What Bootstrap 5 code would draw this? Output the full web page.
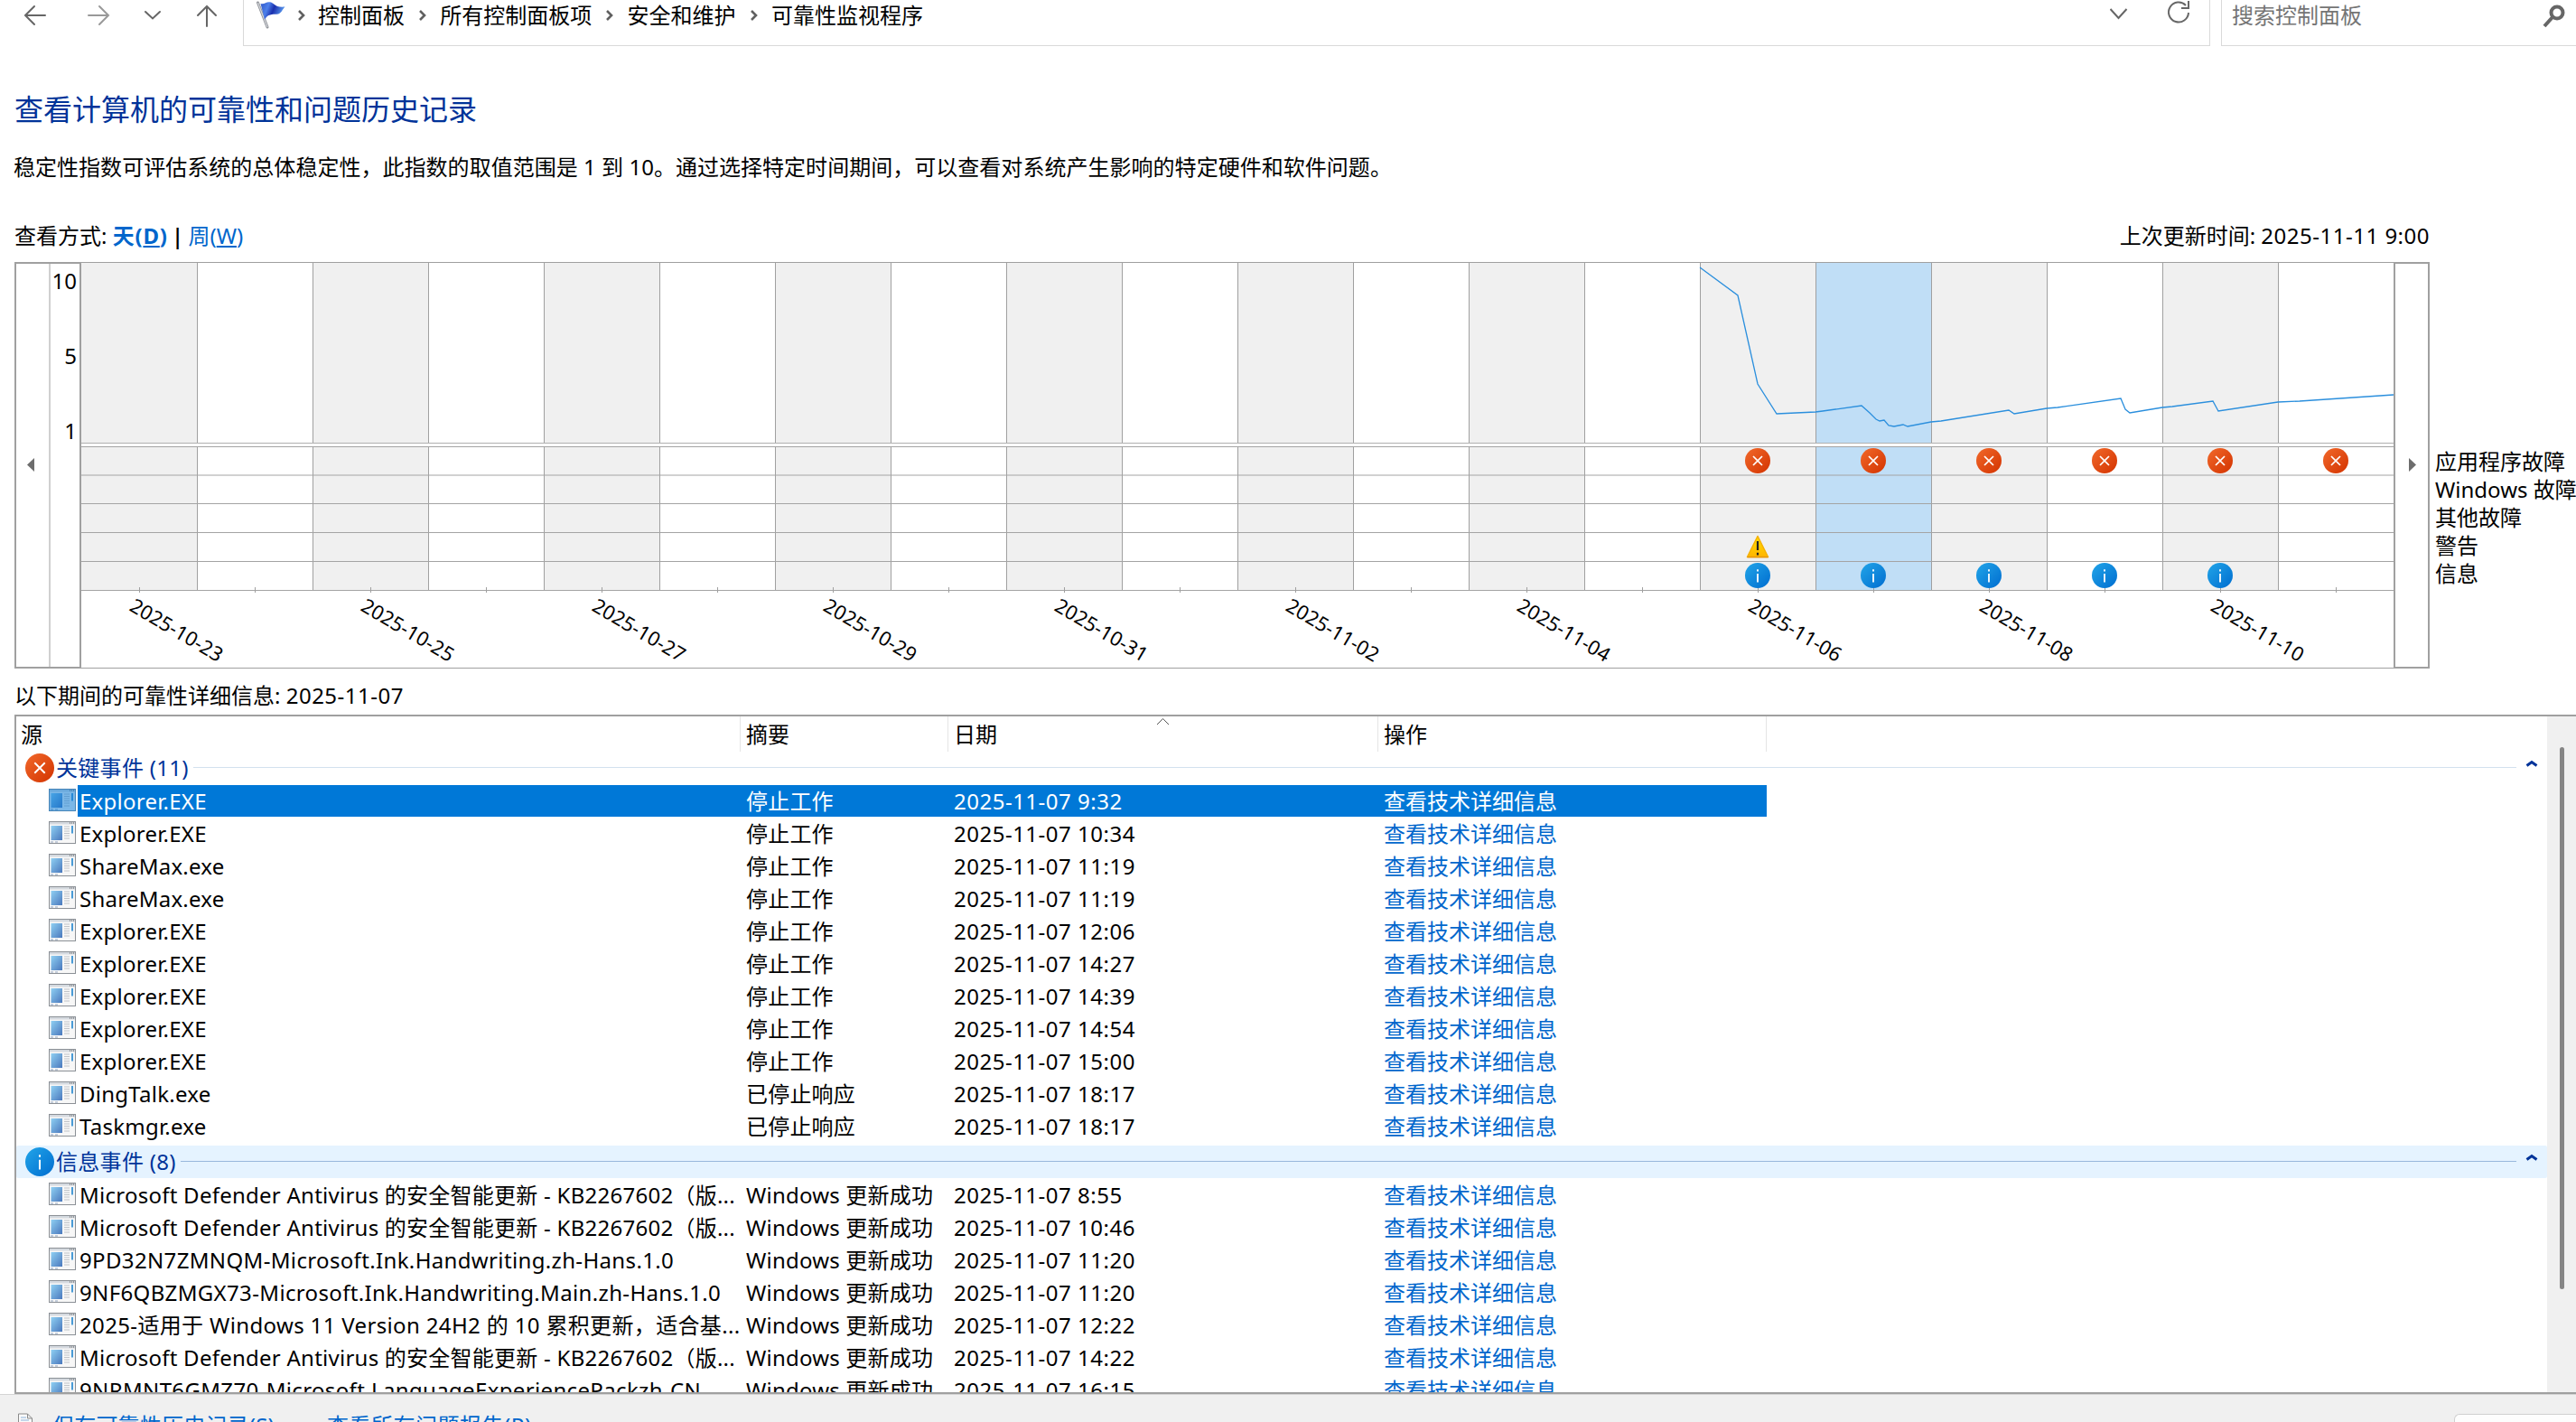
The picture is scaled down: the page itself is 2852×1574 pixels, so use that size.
<!DOCTYPE html>
<html lang="zh-CN">
  <head>
    <meta charset="UTF-8" />
    <meta name="viewport" content="width=device-width, initial-scale=1.0" />
    <title>可靠性监视程序</title>
    <!-- Bootstrap CSS -->
    <link
      href="https://cdn.jsdelivr.net/npm/bootstrap@5.3.0/dist/css/bootstrap.min.css"
      rel="stylesheet"
    />
    <style>
      body {
        width: 2852px;
        height: 1574px;
        overflow: hidden;
        font-family: "Noto Sans", "Noto Sans CJK SC", sans-serif;
        font-size: 24px;
        line-height: 36px;
        color: #000;
        background: #fff;
      }

      svg {
        display: block;
        flex: none;
      }

      /* Address bar */
      .top-bar {
        height: 51px;
        padding-left: 22px;
      }

      .nav-icons {
        width: 247px;
      }

      .address-box {
        width: 2178px;
        height: 51px;
        margin-right: 12px;
        padding: 0 20px 17px 12px;
        border: 1px solid #d9d9d9;
        border-top: 0;
      }

      .search-box {
        height: 51px;
        padding: 0 11px 17px 11px;
        border: 1px solid #d9d9d9;
        border-width: 0 0 1px 1px;
        color: #757575;
      }

      .crumb-sep {
        width: 39.3px;
      }

      .crumb-sep.first {
        width: 34px;
      }

      .first svg {
        margin-left: -4px;
      }

      /* Heading and texts */
      .page-title {
        font-size: 32px;
        line-height: 48px;
        color: #003399;
        margin: 46px 0 0 16px;
      }

      .intro {
        margin: 22px 0 0 15px;
        letter-spacing: 0.03px;
      }

      .view-row {
        width: 2690px;
        margin-top: 40px;
        padding-left: 16px;
        height: 47px;
      }

      .blue-link {
        color: #0066cc;
        text-decoration: none;
      }

      .day-link {
        letter-spacing: 0.8px;
      }

      .view-bar {
        margin: 0 -1px 0 -2px;
        font-weight: 600;
      }

      .num {
        letter-spacing: 0.5px;
      }

      /* Chart */
      .chart-box {
        margin-left: 16px;
        height: 450px;
      }

      .legend-list {
        padding: 205px 0 0 6px;
        line-height: 31px;
      }

      .detail-label {
        margin: 12px 0 3px 16px;
      }

      /* Event list */
      .event-box {
        margin-left: 16px;
        height: 752px;
        border: 2px solid #a0a0a0;
        border-right: 0;
        overflow: hidden;
      }

      .list-head {
        height: 39px;
      }

      .list-head > div {
        height: 39px;
        padding-top: 2px;
        border-right: 1px solid #e5e5e5;
      }

      .sort-mark {
        margin-top: -2px;
      }

      .c-source {
        width: 802px;
        padding-left: 5px;
      }

      .c-summary {
        width: 230px;
        padding-left: 6px;
      }

      .c-date {
        width: 476px;
        padding-left: 6px;
      }

      .c-action {
        width: 430px;
        padding-left: 6px;
      }

      .group-row {
        height: 36px;
        margin-bottom: 1px;
        padding-left: 10px;
        color: #003399;
        width: 2802px;
        border-radius: 2px;
      }

      .group-row span {
        padding-left: 2px;
        letter-spacing: 0.3px;
      }

      .group-row.hot {
        margin-top: 3px;
        background: #e5f3ff;
      }

      .group-line {
        height: 1px;
        background: #d3e1ee;
        margin: 0 0 1px 5px;
      }

      .hot .group-line {
        background: #98b8dc;
      }

      .event-row {
        height: 36px;
        padding-left: 36px;
      }

      .event-row .c-name {
        width: 734px;
        padding-left: 2px;
        height: 35px;
        letter-spacing: 0.25px;
      }

      .event-row .c-name.pkg {
        letter-spacing: 0.35px;
      }

      .event-row .c-summary {
        letter-spacing: 0.2px;
      }

      .fill {
        width: 1870px;
        height: 35px;
      }

      .picked .fill {
        background: #0078d7;
        color: #fff;
      }

      .picked .blue-link {
        color: #fff;
      }

      .scroll-rail {
        width: 32px;
        background: #f0f0f0;
        padding: 34px 12px 0 14px;
      }

      .scroll-thumb {
        height: 600px;
        width: 5px;
        border-radius: 3px;
        background: #858585;
      }

      .bottom-bar {
        height: 31px;
        background: #f0f0f0;
        border-top: 1px solid #d4d4d4;
        padding-left: 19px;
        overflow: hidden;
      }

      .bottom-bar svg {
        margin-top: 20px;
      }

      .bottom-bar a {
        margin: 16px 58px 0 13px;
        letter-spacing: 0.2px;
      }

      .bottom-bar a + a {
        margin-left: 0;
        letter-spacing: 0.5px;
      }

      .ok-btn {
        width: 135px;
        height: 40px;
        margin-top: 21px;
        background: #fdfdfd;
        border: 1px solid #d0d0d0;
        border-right: 0;
        border-radius: 6px 0 0 0;
      }
    </style>
  </head>
  <body>
    <!-- Shared icons -->
    <svg width="0" height="0" class="position-absolute">
      <defs>
        <linearGradient id="gRed" x1="0" y1="0" x2="1" y2="1">
          <stop offset="0" stop-color="#f1692b" />
          <stop offset="1" stop-color="#d33300" />
        </linearGradient>
        <linearGradient id="gBlue" x1="0" y1="0" x2="1" y2="1">
          <stop offset="0" stop-color="#22a5e8" />
          <stop offset="1" stop-color="#006dd0" />
        </linearGradient>
        <linearGradient id="gWarn" x1="0" y1="0" x2="0" y2="1">
          <stop offset="0" stop-color="#ffe000" />
          <stop offset="1" stop-color="#ffb400" />
        </linearGradient>
        <linearGradient id="gApp" x1="0" y1="0" x2="1" y2="1">
          <stop offset="0" stop-color="#8fd0f3" />
          <stop offset="1" stop-color="#4a78bd" />
        </linearGradient>
        <linearGradient id="gFlag" x1="0" y1="0" x2="1" y2="0.3">
          <stop offset="0" stop-color="#2f55c8" />
          <stop offset="0.35" stop-color="#4d80ea" />
          <stop offset="0.6" stop-color="#1a2fae" />
          <stop offset="1" stop-color="#5c9cf0" />
        </linearGradient>
        <symbol id="icoError" viewBox="0 0 28 28">
          <circle cx="14" cy="14" r="14" fill="url(#gRed)" />
          <path d="M9 9l10 10M19 9L9 19" stroke="#fff" stroke-width="1.7" />
        </symbol>
        <symbol id="icoInfo" viewBox="0 0 28 28">
          <circle cx="14" cy="14" r="14" fill="url(#gBlue)" />
          <path d="M14 12v9.500M14 7.300v2.200" stroke="#fff" stroke-width="1.8" />
        </symbol>
        <symbol id="icoWarn" viewBox="0 0 26 26">
          <path
            d="M13 1.500L24.500 24.500H1.500Z"
            fill="url(#gWarn)"
            stroke="#f5b000"
            stroke-width="1.500"
            stroke-linejoin="round"
          />
          <path d="M1.500 24.800H24.500" stroke="#e08a00" stroke-width="1" />
          <path d="M13 7v10M13 19.800v2.700" stroke="#222" stroke-width="2.200" />
        </symbol>
        <symbol id="icoApp" viewBox="0 0 30 26">
          <rect x="0.500" y="0.500" width="29" height="24" fill="#f7f7f7" stroke="#8b9096" />
          <rect x="1" y="1" width="28" height="2.500" fill="#d5dae0" />
          <path d="M23 2h1M25 2h1M27 2h1" stroke="#555" />
          <rect x="2.500" y="5" width="12.500" height="16" fill="url(#gApp)" />
          <path
            d="M17 6h6M17 8.500h6M17 11h6M17 13.500h6M17 16h6M17 19h6"
            stroke="#c0c3c8"
          />
          <path d="M26 5v8.500" stroke="#4a9bd6" stroke-width="2" />
          <path d="M2 23h3M7 23h3" stroke="#8fa3c0" />
        </symbol>
      </defs>
    </svg>

    <!-- Address bar -->
    <div class="top-bar d-flex">
      <div class="nav-icons">
        <svg
          width="247"
          height="36"
          fill="none"
          stroke="#666"
          stroke-width="2"
          stroke-linecap="round"
        >
          <path d="M28 17H6M16 7L6 17l10 10" />
          <path d="M76 17h22M88 7l10 10-10 10" stroke="#999" />
          <path d="M139 13l8 7.500 8-7.500" />
          <path d="M207 29V7M197 17L207 7l10 10" />
        </svg>
      </div>
      <div class="address-box d-flex align-items-center">
        <svg width="36" height="34" viewBox="0 0 36 34">
          <path d="M3.500 3l10.500 27" stroke="#8f9298" stroke-width="3" stroke-linecap="round" />
          <path d="M3.500 3l10.500 27" stroke="#d4d6da" stroke-width="1.200" />
          <path
            d="M6.500 4c4 1 6-2 10-1.800 5 .3 5 6.500 17 5.300-3 3-4 8-9 8.300-5 .2-10-.5-13.500 6z"
            fill="url(#gFlag)"
          />
        </svg>
        <span class="crumb-sep first" data-sep></span>
        <span>控制面板</span>
        <span class="crumb-sep" data-sep></span>
        <span>所有控制面板项</span>
        <span class="crumb-sep" data-sep></span>
        <span>安全和维护</span>
        <span class="crumb-sep" data-sep></span>
        <span>可靠性监视程序</span>
        <svg class="ms-auto" width="90" height="34" fill="none" stroke="#666" stroke-width="2">
          <path d="M0.500 10l9 10 9-10" />
          <path d="M84 6a11 11 0 1 0 3 8M87 1v8h-8" />
        </svg>
      </div>
      <div class="search-box d-flex flex-fill align-items-center">
        <span>搜索控制面板</span>
        <svg class="ms-auto" width="26" height="34" fill="none" stroke="#666">
          <circle cx="16" cy="14" r="6.500" stroke-width="4" />
          <path d="M11 19L2 29" stroke-width="4" />
        </svg>
      </div>
    </div>

    <h1 class="page-title fw-normal">查看计算机的可靠性和问题历史记录</h1>
    <div class="intro">
      稳定性指数可评估系统的总体稳定性，此指数的取值范围是 1 到
      10。通过选择特定时间期间，可以查看对系统产生影响的特定硬件和软件问题。
    </div>
    <div class="view-row d-flex justify-content-between">
      <div>
        查看方式: <a href="#" class="blue-link day-link fw-bold">天(<u>D</u>)</a>
        <span class="view-bar">|</span>
        <a href="#" class="blue-link">周(<u>W</u>)</a>
      </div>
      <div>上次更新时间: <span class="num">2025-11-11 9:00</span></div>
    </div>

    <!-- Stability chart -->
    <div class="chart-box d-flex">
      <svg id="chart" width="2674" height="450" viewBox="16 290 2674 450"></svg>
      <div class="legend-list text-nowrap">
        <div>应用程序故障</div>
        <div>Windows 故障</div>
        <div>其他故障</div>
        <div>警告</div>
        <div>信息</div>
      </div>
    </div>

    <div class="detail-label">以下期间的可靠性详细信息: <span class="num">2025-11-07</span></div>

    <!-- Event list -->
    <div class="event-box d-flex">
      <div class="flex-fill">
        <div class="list-head d-flex">
          <div class="c-source">源</div>
          <div class="c-summary">摘要</div>
          <div class="c-date d-flex">
            日期
            <svg class="sort-mark ms-auto me-auto" width="150" height="20" fill="none" stroke="#555">
              <path d="M41 9l6.500-6.500L54 9" />
            </svg>
          </div>
          <div class="c-action">操作</div>
        </div>
        <div id="events"></div>
      </div>
      <div class="scroll-rail"><div class="scroll-thumb"></div></div>
    </div>

    <!-- Bottom bar -->
    <div class="bottom-bar d-flex">
      <svg width="26" height="30" viewBox="0 0 26 30">
        <path d="M1.500 1h10l5 5v20h-15zM11.500 1v5h5" fill="#fafafa" stroke="#8a8a8a" />
        <path d="M4 5h6M4 8h9" stroke="#8db4dc" />
      </svg>
      <a href="#" class="blue-link">保存可靠性历史记录(S)</a>
      <a href="#" class="blue-link">查看所有问题报告(R)</a>
      <div class="ok-btn ms-auto"></div>
    </div>

    <!-- Bootstrap JS -->
    <script src="https://cdn.jsdelivr.net/npm/bootstrap@5.3.0/dist/js/bootstrap.bundle.min.js"></script>

    <script>
      // Breadcrumb separators
      document.querySelectorAll("[data-sep]").forEach((el) => {
        el.innerHTML = `<svg width="38" height="34" fill="none" stroke="#606060" stroke-width="2.600"><path d="M17 12l5 5-5 5"/></svg>`;
      });

      // Chart geometry
      const left = 90;
      const step = 128;
      const days = 20;
      const selected = 15;
      const rowLines = [494, 525.5, 557, 589, 621, 653];

      function drawChart() {
        let s = "";
        for (let i = 0; i < days; i++) {
          const x = left + i * step;
          const color = i === selected ? "#c0def6" : i % 2 === 0 ? "#f0f0f0" : "#fff";
          s += `<rect x="${x}" y="291" width="${step}" height="199" fill="${color}"/>`;
          s += `<rect x="${x}" y="494" width="${step}" height="159" fill="${color}"/>`;
        }
        for (let i = 1; i < days; i++) {
          const x = left + i * step + 0.5;
          s += `<path d="M${x} 291V490M${x} 494V653" stroke="#a0a0a0"/>`;
        }
        s += `<path d="M90 490.5H2650" stroke="#b0b0b0"/>`;
        rowLines.forEach((y) => {
          s += `<path d="M90 ${y + 0.5}H2650" stroke="#a4a4a4"/>`;
        });
        // frame and scroll buttons
        s += `<path d="M16 290.500H2690M16 739.500H2690M55 291V739" stroke="#a0a0a0" fill="none"/>`;
        s += `<path d="M17 290V740M89 290V740M2651 290V740M2689 290V740M16 291H90M16 739H90M2650 291H2690M2650 739H2690" stroke="#a0a0a0" stroke-width="2" fill="none"/>`;
        s += `<path d="M38 507v15l-8-7.500zM2667 507v15l8-7.500z" fill="#6d6d6d"/>`;
        // score axis
        [["10", 320], ["5", 403], ["1", 486]].forEach(([t, y]) => {
          s += `<text x="85" y="${y}" text-anchor="end">${t}</text>`;
        });
        // stability index
        s += `<polyline fill="none" stroke="#2b8fdd" stroke-width="1.300" points="1882,296 1924,327 1946,425 1967,458 2010,456 2018,455 2061,449 2070,457 2077,464 2081,466 2086,465 2091,471 2097,472 2107,470 2112,472 2138,467 2149,466 2224,454 2230,458 2266,452 2278,451 2348,441 2353,453 2358,457 2394,451 2405,450 2450,444 2456,455 2522,445 2546,444 2650,437"/>`;
        for (let i = 0; i < days; i++) {
          const x = left + i * step + 64.5;
          s += `<path d="M${x} 650V656" stroke="#a0a0a0"/>`;
        }
        const icons = [["icoError", 14, 19, 496], ["icoInfo", 14, 18, 623]];
        icons.forEach(([id, from, to, y]) => {
          for (let i = from; i <= to; i++) {
            s += `<use href="#${id}" x="${left + i * step + 50}" y="${y}" width="28" height="28"/>`;
          }
        });
        s += `<use href="#icoWarn" x="1933" y="592" width="26" height="26"/>`;
        // date labels, one for every second day
        const labels = [
          "2025-10-23", "2025-10-25", "2025-10-27", "2025-10-29", "2025-10-31",
          "2025-11-02", "2025-11-04", "2025-11-06", "2025-11-08", "2025-11-10",
        ];
        labels.forEach((t, i) => {
          const x = 142 + i * 256;
          s += `<text transform="translate(${x} 675) rotate(30.500)" font-size="22" textLength="115">${t}</text>`;
        });
        document.getElementById("chart").innerHTML = s;
      }

      const defender = "Microsoft Defender Antivirus 的安全智能更新 - KB2267602（版...";
      const ok = "Windows 更新成功";
      const groups = [
        {
          title: "关键事件 (11)",
          icon: "icoError",
          rows: [
            ["Explorer.EXE", "停止工作", "9:32"],
            ["Explorer.EXE", "停止工作", "10:34"],
            ["ShareMax.exe", "停止工作", "11:19"],
            ["ShareMax.exe", "停止工作", "11:19"],
            ["Explorer.EXE", "停止工作", "12:06"],
            ["Explorer.EXE", "停止工作", "14:27"],
            ["Explorer.EXE", "停止工作", "14:39"],
            ["Explorer.EXE", "停止工作", "14:54"],
            ["Explorer.EXE", "停止工作", "15:00"],
            ["DingTalk.exe", "已停止响应", "18:17"],
            ["Taskmgr.exe", "已停止响应", "18:17"],
          ],
        },
        {
          title: "信息事件 (8)",
          icon: "icoInfo",
          hot: true,
          rows: [
            [defender, ok, "8:55"],
            [defender, ok, "10:46"],
            ["9PD32N7ZMNQM-Microsoft.Ink.Handwriting.zh-Hans.1.0", ok, "11:20"],
            ["9NF6QBZMGX73-Microsoft.Ink.Handwriting.Main.zh-Hans.1.0", ok, "11:20"],
            ["2025-适用于 Windows 11 Version 24H2 的 10 累积更新，适合基...", ok, "12:22"],
            [defender, ok, "14:22"],
            ["9NRMNT6GMZ70-Microsoft.LanguageExperiencePackzh-CN", ok, "16:15"],
          ],
        },
      ];

      function drawEvents() {
        let html = "";
        groups.forEach((g, gi) => {
          html += `
            <div class="group-row d-flex align-items-center ${g.hot ? "hot" : ""}">
              <svg width="32" height="32"><use href="#${g.icon}" width="32" height="32"/></svg>
              <span>${g.title}</span>
              <div class="group-line flex-fill"></div>
              <svg width="34" height="20" class="mb-2"><path d="M11.500 11.500l5.500-4 5.500 4" fill="none" stroke="#003399" stroke-width="3"/></svg>
            </div>`;
          g.rows.forEach((r, ri) => {
            const picked = gi === 0 && ri === 0;
            const tint = picked ? `<rect width="30" height="25" fill="#0078d7" opacity="0.5"/>` : "";
            html += `
              <div class="event-row d-flex ${picked ? "picked" : ""}">
                <svg width="32" height="26" class="mt-1"><use href="#icoApp" width="30" height="26"/>${tint}</svg>
                <div class="fill d-flex">
                  <div class="c-name text-nowrap ${/^(9|2025)/.test(r[0]) ? "pkg" : ""}">${r[0]}</div>
                  <div class="c-summary text-nowrap">${r[1]}</div>
                  <div class="c-date num">2025-11-07 ${r[2]}</div>
                  <div class="c-action"><a href="#" class="blue-link">查看技术详细信息</a></div>
                </div>
              </div>`;
          });
        });
        document.getElementById("events").innerHTML = html;
      }

      drawChart();
      drawEvents();
    </script>
  </body>
</html>
